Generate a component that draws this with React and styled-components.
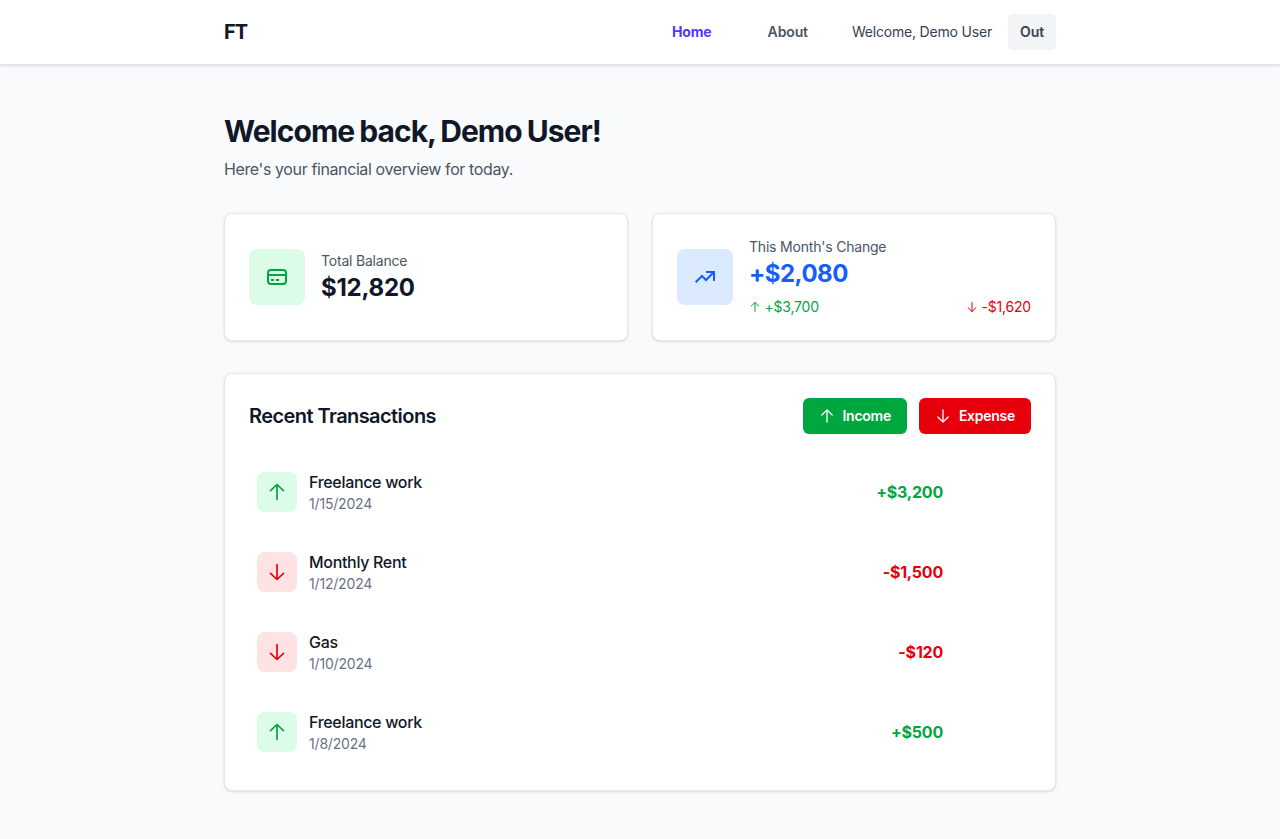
import React from "react";
import styled, { createGlobalStyle } from "styled-components";

const GlobalStyle = createGlobalStyle`
  *, *::before, *::after { box-sizing: border-box; }
  body { margin: 0; background: #f9fafb; color: #101828; font-family: Inter, "Liberation Sans", sans-serif; font-size: 16px; line-height: 24px; -webkit-font-smoothing: antialiased; }
  h1, h2, p { margin: 0; }
  button { font-family: inherit; border: 0; cursor: pointer; }
  svg { display: block; flex-shrink: 0; }
`;

const tones = {
  green: { ink: "#00a63e", tint: "#dcfce7" },
  red: { ink: "#e7000b", tint: "#ffe2e2" },
  blue: { ink: "#155dfc", tint: "#dbeafe" },
};

const Page = styled.div`
  min-height: 839px;
`;
const Header = styled.header`
  height: 65px;
  background: #fff;
  border-bottom: 1px solid #e5e7eb;
  box-shadow: 0 1px 3px rgba(0, 0, 0, 0.1), 0 1px 2px -1px rgba(0, 0, 0, 0.1);
`;
const HeaderInner = styled.div`
  width: 832px;
  height: 64px;
  margin: 0 auto;
  display: flex;
  align-items: center;
  justify-content: space-between;
`;
const Logo = styled.span`
  font-size: 20px;
  line-height: 28px;
  font-weight: 700;
  letter-spacing: -0.9px;
`;
const Nav = styled.nav`
  display: flex;
  align-items: center;
  font-size: 14px;
  line-height: 20px;
`;
const NavLink = styled.a`
  font-weight: ${(p) => (p.$active ? 650 : 570)};
  color: ${(p) => (p.$active ? "#4f39f6" : "#4a5565")};
  margin-right: ${(p) => p.$gap}px;
  letter-spacing: -0.13px;
`;
const Greeting = styled.span`
  color: #364153;
  margin-right: 16px;
  letter-spacing: -0.19px;
`;
const OutButton = styled.button`
  width: 48px;
  height: 36px;
  padding: 0 0 1px;
  border-radius: 6px;
  background: #f3f4f6;
  color: #364153;
  font-size: 14px;
  line-height: 20px;
  font-weight: 570;
  letter-spacing: -0.1px;
`;
const Main = styled.main`
  width: 832px;
  margin: 0 auto;
  padding: 47px 0;
`;
const Title = styled.h1`
  font-size: 30px;
  line-height: 38px;
  font-weight: 730;
  letter-spacing: -0.95px;
  word-spacing: -1.2px;
  white-space: nowrap;
`;
const Subtitle = styled.p`
  margin-top: 7px;
  color: #4a5565;
  letter-spacing: -0.39px;
`;
const Card = styled.section`
  background: #fff;
  border: 1px solid #e5e7eb;
  border-radius: 8px;
  box-shadow: 0 1px 3px rgba(0, 0, 0, 0.1), 0 1px 2px -1px rgba(0, 0, 0, 0.1);
`;
const Summary = styled.div`
  display: grid;
  grid-template-columns: 1fr 1fr;
  gap: 24px;
  margin: 32px 0;
`;
const StatCard = styled(Card)`
  height: 128px;
  padding: 0 24px;
  display: flex;
  align-items: center;
  gap: 16px;
`;
const IconTile = styled.div`
  width: ${(p) => p.$size}px;
  height: ${(p) => p.$size}px;
  border-radius: 8px;
  flex-shrink: 0;
  display: grid;
  place-items: center;
  background: ${(p) => tones[p.$tone].tint};
  color: ${(p) => tones[p.$tone].ink};
`;
const StatBody = styled.div`
  flex: 1;
`;
const Label = styled.p`
  font-size: 14px;
  line-height: 20px;
  color: #4a5565;
  letter-spacing: -0.2px;
`;
const Value = styled.p`
  font-size: 24px;
  line-height: 32px;
  padding-top: 1px;
  height: 32px;
  font-weight: 720;
  letter-spacing: ${(p) => (p.$tone ? -0.5 : -0.25)}px;
  color: ${(p) => (p.$tone ? tones[p.$tone].ink : "#101828")};
`;
const Split = styled.div`
  display: flex;
  justify-content: space-between;
  margin-top: 8px;
`;
const Delta = styled.span`
  display: flex;
  align-items: center;
  gap: 3.5px;
  font-size: 14px;
  line-height: 20px;
  font-weight: 440;
  letter-spacing: -0.2px;
  color: ${(p) => tones[p.$tone].ink};
`;
const Panel = styled(Card)`
  height: 418px;
  padding: 24px;
`;
const PanelHead = styled.div`
  display: flex;
  justify-content: space-between;
  align-items: center;
  margin-bottom: 22px;
`;
const Heading = styled.h2`
  font-size: 20px;
  line-height: 28px;
  font-weight: 620;
  letter-spacing: -0.57px;
`;
const Actions = styled.div`
  display: flex;
  gap: 12px;
`;
const ActionButton = styled.button`
  height: 36px;
  padding: 0 16px 1px;
  border-radius: 6px;
  display: flex;
  align-items: center;
  gap: 8px;
  background: ${(p) => tones[p.$tone].ink};
  color: #fff;
  font-size: 14px;
  line-height: 20px;
  font-weight: 600;
  letter-spacing: -0.27px;
`;
const List = styled.div`
  display: grid;
  gap: 8px;
`;
const Row = styled.div`
  height: 72px;
  padding: 0 88px 0 8px;
  display: flex;
  align-items: center;
  gap: 12px;
`;
const RowText = styled.div`
  flex: 1;
`;
const Name = styled.p`
  font-weight: 520;
  letter-spacing: -0.32px;
`;
const DateText = styled.p`
  font-size: 14px;
  line-height: 20px;
  color: #6a7282;
  letter-spacing: -0.18px;
`;
const Amount = styled.span`
  font-weight: 650;
  letter-spacing: -0.22px;
  color: ${(p) => tones[p.$tone].ink};
`;

const Arrow = ({ down, size }) => (
  <svg width={size} height={size} viewBox="0 0 24 24" fill="none" stroke="currentColor" strokeWidth="2" strokeLinecap="round" strokeLinejoin="round">
    <path d={down ? "M12 3v18M4.2 13.6l7.8 7.4 7.8-7.4" : "M12 21V3M4.2 10.4L12 3l7.8 7.4"} />
  </svg>
);
const CardIcon = () => (
  <svg width="24" height="24" viewBox="0 0 24 24" fill="none" stroke="currentColor" strokeWidth="2">
    <rect x="3" y="5" width="18" height="14" rx="3" />
    <path d="M3 10h18M6 15h3M11 15h3" />
  </svg>
);
const TrendIcon = () => (
  <svg width="24" height="24" viewBox="0 0 24 24" fill="none" stroke="currentColor" strokeWidth="2">
    <path d="M13 7h8v9M21 7l-8 8-4-4-6.3 6.3" />
  </svg>
);

const transactions = [
  { name: "Freelance work", date: "1/15/2024", amount: "+$3,200", tone: "green" },
  { name: "Monthly Rent", date: "1/12/2024", amount: "-$1,500", tone: "red" },
  { name: "Gas", date: "1/10/2024", amount: "-$120", tone: "red" },
  { name: "Freelance work", date: "1/8/2024", amount: "+$500", tone: "green" },
];

export default function App() {
  return (
    <Page>
      <GlobalStyle />
      <Header>
        <HeaderInner>
          <Logo>FT</Logo>
          <Nav>
            <NavLink $active $gap={56}>Home</NavLink>
            <NavLink $gap={44}>About</NavLink>
            <Greeting>Welcome, Demo User</Greeting>
            <OutButton>Out</OutButton>
          </Nav>
        </HeaderInner>
      </Header>
      <Main>
        <Title>Welcome back, Demo User!</Title>
        <Subtitle>Here's your financial overview for today.</Subtitle>
        <Summary>
          <StatCard>
            <IconTile $size={56} $tone="green"><CardIcon /></IconTile>
            <StatBody>
              <Label>Total Balance</Label>
              <Value>$12,820</Value>
            </StatBody>
          </StatCard>
          <StatCard>
            <IconTile $size={56} $tone="blue"><TrendIcon /></IconTile>
            <StatBody>
              <Label>This Month's Change</Label>
              <Value $tone="blue">+$2,080</Value>
              <Split>
                <Delta $tone="green"><Arrow size={12} />+$3,700</Delta>
                <Delta $tone="red"><Arrow down size={12} />-$1,620</Delta>
              </Split>
            </StatBody>
          </StatCard>
        </Summary>
        <Panel>
          <PanelHead>
            <Heading>Recent Transactions</Heading>
            <Actions>
              <ActionButton $tone="green"><Arrow size={16} />Income</ActionButton>
              <ActionButton $tone="red"><Arrow down size={16} />Expense</ActionButton>
            </Actions>
          </PanelHead>
          <List>
            {transactions.map((t) => (
              <Row key={t.date}>
                <IconTile $size={40} $tone={t.tone}><Arrow down={t.tone === "red"} size={20} /></IconTile>
                <RowText>
                  <Name>{t.name}</Name>
                  <DateText>{t.date}</DateText>
                </RowText>
                <Amount $tone={t.tone}>{t.amount}</Amount>
              </Row>
            ))}
          </List>
        </Panel>
      </Main>
    </Page>
  );
}
